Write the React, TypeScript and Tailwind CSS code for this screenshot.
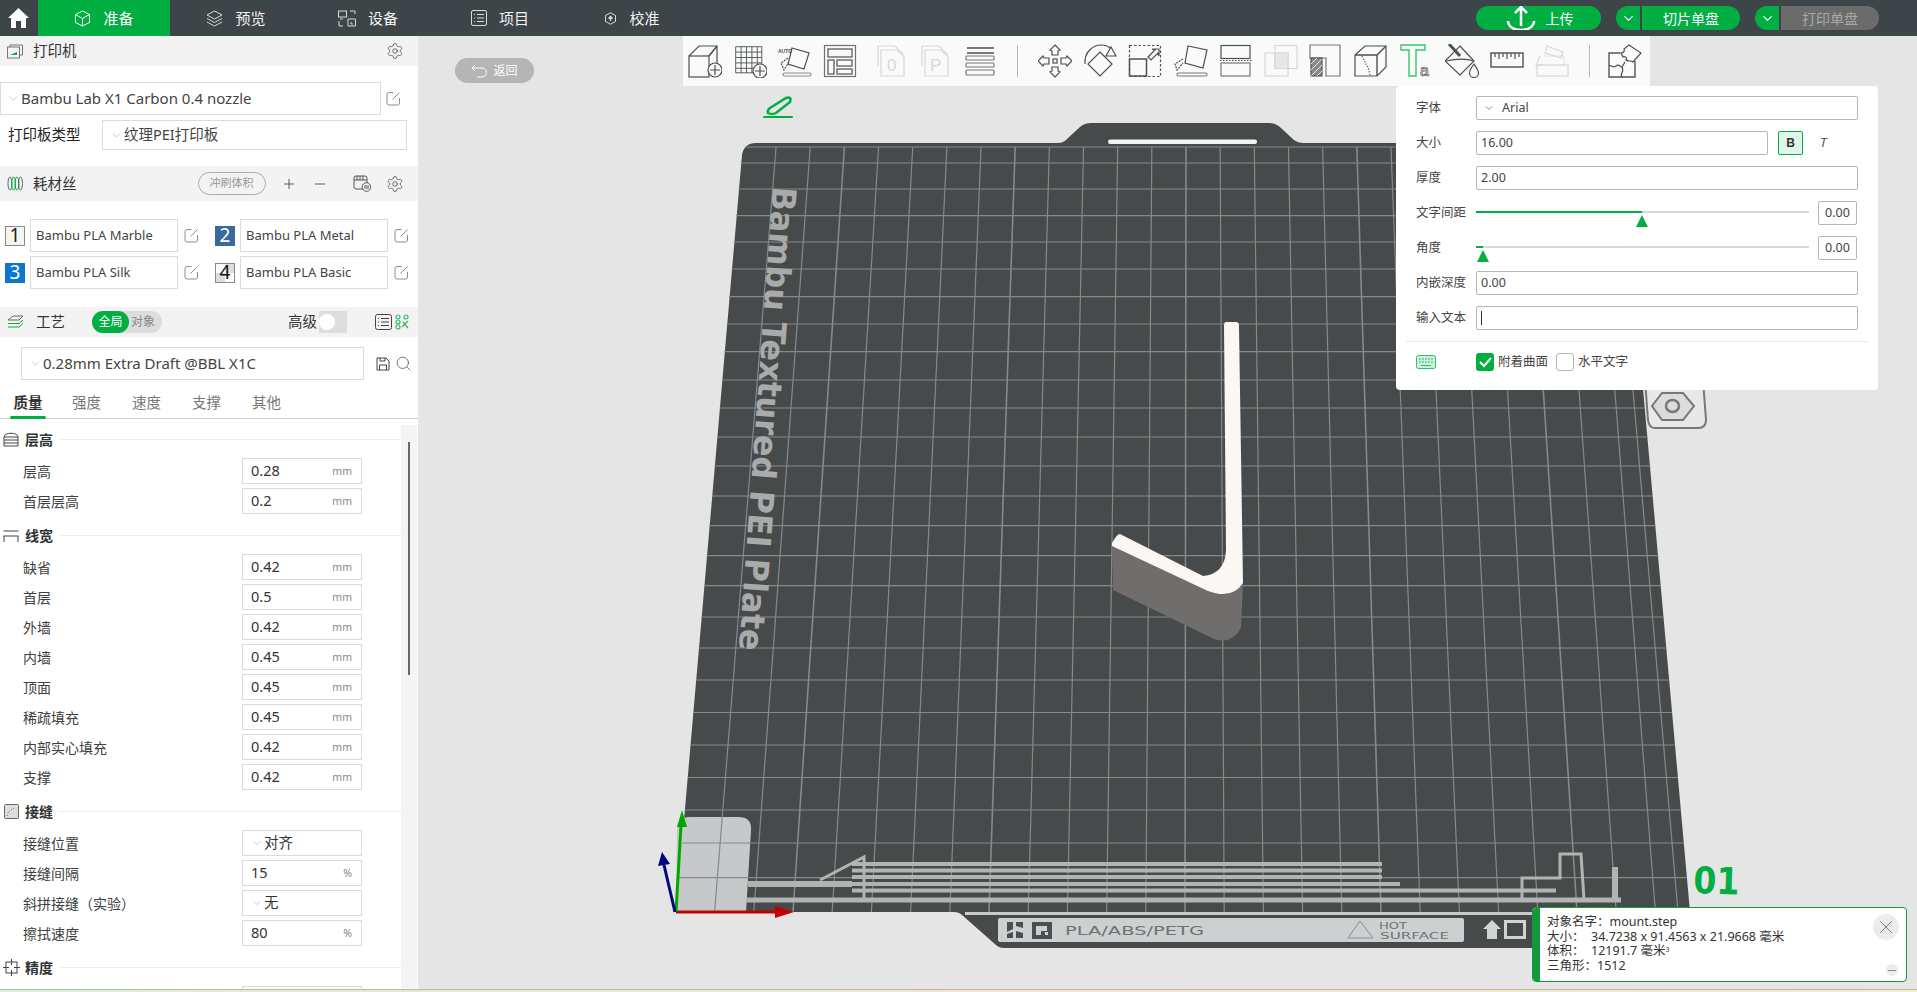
import { ChevronDown, Minus, Plus, Search, Settings, X } from "lucide-react";
import type { ReactNode } from "react";

const ink = "#4b5050";

function Ico({ children, off }: { children: ReactNode; off?: boolean }) {
  return (
    <svg width="34" height="34" viewBox="0 0 34 34" fill="none" stroke={off ? "#d6d8d8" : ink} strokeWidth="1.2" className="shrink-0">
      {children}
    </svg>
  );
}

function Edit() {
  return (
    <svg width="15" height="15" viewBox="0 0 15 15" fill="none" stroke="#8b8f8f" strokeWidth="1" className="shrink-0">
      <path d="M7.5 1.5H3a2 2 0 0 0-2 2v8.5a2 2 0 0 0 2 2h8.5a2 2 0 0 0 2-2V7" />
      <path d="M6.5 8.5 13.5 1.5" />
    </svg>
  );
}

const tools1 = [
  <Ico key="cube">
    <path d="M1 12 11 2h18v22" /><rect x="1" y="12" width="20" height="21" /><path d="M21 12 29 2" strokeWidth="1.6" />
    <circle cx="27" cy="26" r="7" fill="#fafafa" /><path d="M27 21v10M22 26h10" />
  </Ico>,
  <Ico key="grid">
    <path d="M3 3h29v29H3zM9 3v29M15 3v29M21 3v29M27 3v29M3 9h29M3 15h29M3 21h29M3 27h29" strokeWidth="1" transform="scale(.9)" />
    <circle cx="27" cy="27" r="7" fill="#fafafa" /><path d="M27 22v10M22 27h10" />
  </Ico>,
  <Ico key="auto">
    <path d="M14 4 31 9 26 25 10 20Z" /><path d="M10 14 3 19l3 7 5-8" strokeDasharray="2 1" />
    <rect x="5" y="29" width="28" height="3" rx="1.5" stroke="#8a8d8d" />
    <text x="0" y="9" fontSize="5" fill={ink} stroke="none" fontFamily="Liberation Sans" fontWeight="700">AUTO</text>
  </Ico>,
  <Ico key="arrange">
    <rect x="1.5" y="1.5" width="31" height="31" stroke="#6e7272" /><rect x="5" y="5" width="24" height="8" /><rect x="5" y="16" width="6" height="14" /><rect x="14" y="16" width="15" height="6" /><rect x="14" y="25" width="15" height="5" />
  </Ico>,
];

const tools2 = [
  <Ico key="p0" off>
    <path d="M4 22V2h17l8 8v20" /><path d="M7 6h16l7 7v19H7Z" fill="#fafafa" />
    <text x="13" y="27" fontSize="17" fill="#d6d8d8" stroke="none" fontFamily="Liberation Sans">0</text>
  </Ico>,
  <Ico key="pp" off>
    <path d="M4 22V2h17l8 8v20" /><path d="M7 6h16l7 7v19H7Z" fill="#fafafa" />
    <text x="12" y="27" fontSize="17" fill="#d6d8d8" stroke="none" fontFamily="Liberation Sans">P</text>
  </Ico>,
  <Ico key="stack">
    <path d="M5 4h27M5 9h27" strokeWidth="1.6" /><rect x="4" y="12" width="28" height="4" rx="1" stroke="#777" /><rect x="4" y="19" width="28" height="4" rx="1" stroke="#777" /><rect x="4" y="26" width="28" height="5" rx="1" stroke="#777" />
  </Ico>,
];

const tools3 = [
  <Ico key="move">
    <rect x="15" y="15" width="4" height="4" />
    <path d="m17 1 5 5-2 1v4h-6V7l-2-1ZM17 33l5-5-2-1v-4h-6v4l-2 1ZM0 17l5-5 1 2h5v6H6l-1 2ZM34 17l-5-5-1 2h-5v6h5l1 2Z" />
  </Ico>,
  <Ico key="rotate">
    <path d="M17 8 29 20 17 32 5 20Z" /><path d="M2 20C1 8 10 1 18 1c4 0 7 1 9 3" /><path d="M28 3 33 12H23Z" />
  </Ico>,
  <Ico key="scale">
    <rect x="1.5" y="1.5" width="31" height="31" strokeDasharray="2.5 2" /><rect x="1.5" y="15" width="17" height="17" strokeWidth="1.5" />
    <path d="m20 13 7-7-3-1h7v7l-1-3-7 7Z" />
  </Ico>,
  <Ico key="lay">
    <path d="M14 2 33 6l-4 18-18-5Z" /><path d="M9 15 1 20l2 6 6-7" strokeDasharray="2 1" /><rect x="3" y="29" width="30" height="3" rx="1.5" stroke="#777" />
  </Ico>,
  <Ico key="cut">
    <rect x="2" y="1.5" width="29" height="13" /><rect x="2" y="19" width="29" height="13" stroke="#777" /><path d="M1 16.5h32" strokeDasharray="1.5 1.5" />
  </Ico>,
  <Ico key="bool" off>
    <rect x="11" y="1.5" width="22" height="23" /><rect x="1" y="9" width="23" height="23" /><path d="M11 9h13v15.500H11Z" fill="#e6e8e8" />
  </Ico>,
  <Ico key="support">
    <path d="M1 1h30v31H17V14H1Z" stroke="#777" /><rect x="2" y="14" width="11" height="18" fill="#8a8a8a" stroke="#555" /><path d="m2 20 6-6M2 26l11-11M2 32l11-11M8 32l5-5" stroke="#eee" strokeWidth=".9" />
  </Ico>,
  <Ico key="seam">
    <path d="M1 11 11 2h21v21l-9 9H1Z" /><path d="M1 11h22l9-9M23 11v21" strokeWidth="1.4" /><path d="M8 12c3 5 3 8 6 11l2 8" strokeDasharray="1.2 1.6" />
  </Ico>,
  <Ico key="text">
    <path d="M1 1h24v5h-9v26H9V6H1Z" stroke="#39c56c" strokeWidth="1.4" />
    <text x="20" y="32" fontSize="16" fontFamily="Liberation Sans" fill="#fafafa" stroke={ink} strokeWidth=".7">a</text>
  </Ico>,
  <Ico key="paint">
    <path d="M15 2 29 17 15 31 0 17Z" /><path d="M1 17c9-2 19-3 28 0" /><path d="M4 0 15 12" strokeWidth="3" />
    <path d="M29 20c-3 4-4.500 6-4.500 9a4.500 4.500 0 0 0 9 0c0-3-2-5-4.500-9Z" fill="#fafafa" />
  </Ico>,
  <Ico key="ruler">
    <rect x="1" y="9" width="32" height="14" strokeWidth="1.4" /><path d="M5 9v4M9 9v6M13 9v4M17 9v6M21 9v4M25 9v6M29 9v4" />
  </Ico>,
  <Ico key="assemble" off>
    <path d="M12 2 28 8l-2 6-16-5Z" /><path d="M5 12 1 22l7-2" /><rect x="2" y="21" width="31" height="11" /><path d="M9 12h20v9" strokeDasharray="1.5 1" />
  </Ico>,
];

const toolPuzzle = (
  <Ico>
    <path d="M12 9H1V33H27V17" stroke="#555" strokeWidth="1.400" />
    <path d="M1 22c3-2 3 3 7 0s4 2 6 1M14 33c-3-3 3-5 0-10l3-5" />
    <path d="M21 1 33 9 25 18C23 16 20 18 18 16 20 14 17 12 15 13L13 9C16 9 17 6 16 5Z" fill="#fafafa" />
  </Ico>
);

const rowsHeight = [
  { label: "层高", value: "0.28", unit: "mm" },
  { label: "首层层高", value: "0.2", unit: "mm" },
];
const rowsWidth = [
  { label: "缺省", value: "0.42", unit: "mm" },
  { label: "首层", value: "0.5", unit: "mm" },
  { label: "外墙", value: "0.42", unit: "mm" },
  { label: "内墙", value: "0.45", unit: "mm" },
  { label: "顶面", value: "0.45", unit: "mm" },
  { label: "稀疏填充", value: "0.45", unit: "mm" },
  { label: "内部实心填充", value: "0.42", unit: "mm" },
  { label: "支撑", value: "0.42", unit: "mm" },
];
const rowsSeam = [
  { label: "接缝位置", value: "对齐", select: true },
  { label: "接缝间隔", value: "15", unit: "%" },
  { label: "斜拼接缝（实验）", value: "无", select: true },
  { label: "擦拭速度", value: "80", unit: "%" },
];

type Row = { label: string; value: string; unit?: string; select?: boolean };

function Group({ icon, title, rows }: { icon: ReactNode; title: string; rows: Row[] }) {
  return (
    <div className="mt-[9px] first:mt-[8px]">
      <div className="flex h-[24px] items-center">
        <div className="flex w-[25px] justify-center pr-[3px]">{icon}</div>
        <span className="text-[14px] font-bold text-[#2f3333]">{title}</span>
        <div className="ml-[6px] mr-[6px] h-px flex-1 bg-[#eeeeee]" />
      </div>
      <div className="mt-[7px] flex flex-col gap-[4px]">
        {rows.map((r) => (
          <div key={r.label} className="flex h-[26px] items-center">
            <span className="w-[242px] pl-[23px] text-[14px] text-[#3c4040]">{r.label}</span>
            <div className="flex h-[26px] w-[120px] items-center border border-[#dbdbdb] pl-[8px] pr-[9px] text-[14.500px] text-[#333]">
              {r.select && <ChevronDown size={12} strokeWidth={1} className="mr-[1px] text-[#999]" />}
              <span className="flex-1">{r.value}</span>
              {r.unit && <span className="pt-[2px] text-[10.500px] text-[#888]">{r.unit}</span>}
            </div>
          </div>
        ))}
      </div>
    </div>
  );
}

function SectionHead({ icon, title, children, left = 33 }: { icon: ReactNode; title: string; children?: ReactNode; left?: number }) {
  return (
    <div className="flex h-full items-center bg-[#f3f3f3] pl-[7px]">
      <div className="flex items-center" style={{ width: left - 7 }}>{icon}</div>
      <span className="text-[14.5px] text-[#333]">{title}</span>
      {children}
    </div>
  );
}

function Swatch({ n, cls }: { n: number; cls: string }) {
  return (
    <div className={`flex h-[20px] w-[20px] shrink-0 items-center justify-center text-[19px] leading-none ${cls}`}>{n}</div>
  );
}

function Filament({ n, cls, name }: { n: number; cls: string; name: string }) {
  return (
    <div className="flex w-[210px] shrink-0 items-center">
      <Swatch n={n} cls={cls} />
      <div className="ml-[5px] flex h-[33px] w-[148px] shrink-0 items-center border border-[#dcdcdc] pl-[5px] text-[13px] text-[#444]">{name}</div>
      <div className="ml-[6px]"><Edit /></div>
    </div>
  );
}

function Sidebar() {
  return (
    <aside className="relative flex h-full w-[418px] shrink-0 flex-col overflow-hidden bg-white">
      <div className="h-[30px] shrink-0">
        <SectionHead
          title="打印机"
          icon={
            <svg width="16" height="15" viewBox="0 0 16 15" fill="none" stroke="#777">
              <rect x=".5" y="3" width="12" height="11" /><path d="M3 3V1h12.5v10H13" /><path d="M3 11h7V8L3 11Z" fill="#00ae42" stroke="none" />
            </svg>
          }
        >
          <Settings size={18} strokeWidth={1} className="ml-auto mr-[14px] text-[#444]" />
        </SectionHead>
      </div>
      <div className="mt-[16px] flex h-[33px] shrink-0 items-center">
        <div className="flex h-[33px] w-[381px] items-center border border-[#dcdcdc] pl-[6px] text-[15px] text-[#444]">
          <ChevronDown size={13} strokeWidth={1} className="mr-[1px] text-[#999]" />
          Bambu Lab X1 Carbon 0.4 nozzle
        </div>
        <div className="ml-[5px]"><Edit /></div>
      </div>
      <div className="mt-[5px] flex h-[30px] shrink-0 items-center">
        <span className="w-[102px] pl-[8px] text-[14.5px] text-[#222]">打印板类型</span>
        <div className="flex h-[30px] w-[305px] items-center border border-[#dcdcdc] pl-[7px] text-[14.500px] text-[#444]">
          <ChevronDown size={13} strokeWidth={1} className="mr-[1px] text-[#999]" />
          纹理PEI打印板
        </div>
      </div>
      <div className="mt-[16px] h-[35px] shrink-0">
        <SectionHead
          title="耗材丝"
          icon={
            <svg width="16" height="15" viewBox="0 0 16 15" fill="none" stroke="#00ae42" strokeWidth="1">
              <ellipse cx="3" cy="7.5" rx="2" ry="6.5" stroke="#666" /><ellipse cx="6.5" cy="7.5" rx="2" ry="6.5" /><ellipse cx="10" cy="7.5" rx="2" ry="6.5" /><ellipse cx="13.5" cy="7.5" rx="2" ry="6.5" stroke="#666" />
            </svg>
          }
        >
          <div className="ml-[121px] flex h-[23px] w-[68px] items-center justify-center rounded-full border border-[#aaaaaa] text-[11px] text-[#999]">冲刷体积</div>
          <Plus size={16} strokeWidth={1.3} className="ml-[15px] text-[#444]" />
          <Minus size={16} strokeWidth={1.3} className="ml-[15px] text-[#444]" />
          <svg width="18" height="17" viewBox="0 0 18 17" fill="none" stroke="#555" className="ml-[25px]">
            <rect x="1" y="1" width="13" height="13" rx="2" /><path d="M1 5h13M4 1v4M7 1v4M10 1v4" />
            <circle cx="13.5" cy="12" r="4.3" fill="#f3f3f3" /><path d="M11 11h5M11 13h5" />
          </svg>
          <Settings size={18} strokeWidth={1} className="ml-[15px] text-[#444]" />
        </SectionHead>
      </div>
      <div className="mt-[18px] flex shrink-0 flex-col gap-[4px]">
        <div className="flex pl-[5px]">
          <Filament n={1} cls="border border-[#888] bg-[#f7f3ee] text-[#222]" name="Bambu PLA Marble" />
          <Filament n={2} cls="bg-[#3b689c] text-white" name="Bambu PLA Metal" />
        </div>
        <div className="flex pl-[5px]">
          <Filament n={3} cls="bg-[#0c78d2] text-white" name="Bambu PLA Silk" />
          <Filament n={4} cls="border border-[#888] bg-[conic-gradient(#dddddd_25%,#ffffff_0_50%,#dddddd_0_75%,#ffffff_0)] text-[#111]" name="Bambu PLA Basic" />
        </div>
      </div>
      <div className="mt-[18px] h-[30px] shrink-0">
        <SectionHead
          left={36}
          title="工艺"
          icon={
            <svg width="17" height="15" viewBox="0 0 17 15" fill="none" stroke="#666">
              <path d="M1 5 6 1h10l-4 4Z" /><path d="M1 8.5h11l4-3.5" stroke="#00ae42" /><path d="M1 12h11l4-3.5" stroke="#00ae42" />
            </svg>
          }
        >
          <div className="ml-[27px] flex h-[22px] w-[70px] items-center rounded-full bg-[#dddddd] text-[12px]">
            <span className="flex h-[22px] w-[37px] items-center justify-center rounded-full bg-[#00ae42] text-white">全局</span>
            <span className="pl-[2px] text-[#888]">对象</span>
          </div>
          <span className="ml-[126px] text-[14.5px] text-[#333]">高级</span>
          <div className="ml-[2px] flex h-[22px] w-[28px] items-center bg-[#dddddd]">
            <div className="h-[16px] w-[16px] rounded-full bg-white" />
          </div>
          <svg width="17" height="16" viewBox="0 0 17 16" fill="none" stroke="#444" className="ml-[28px]">
            <rect x=".5" y=".5" width="16" height="15" rx="2" /><path d="M3 4.500h1M6 4.500h8M3 8h1M6 8h8M3 11.500h1M6 11.500h8" />
          </svg>
          <svg width="15" height="16" viewBox="0 0 15 16" fill="none" stroke="#39b56b" strokeWidth="1.2" className="ml-[3px]">
            <circle cx="3" cy="3" r="2" /><circle cx="11" cy="3" r="2" /><circle cx="3" cy="8" r="2" /><circle cx="3" cy="13" r="2" /><path d="M7 13 13 7M8 8l5 6" />
          </svg>
        </SectionHead>
      </div>
      <div className="mt-[10px] flex h-[33px] shrink-0 items-center pl-[21px]">
        <div className="flex h-[33px] w-[343px] items-center border border-[#dcdcdc] pl-[7px] text-[15px] text-[#444]">
          <ChevronDown size={13} strokeWidth={1} className="mr-[1px] text-[#999]" />
          0.28mm Extra Draft @BBL X1C
        </div>
        <svg width="14" height="14" viewBox="0 0 14 14" fill="none" stroke="#444" className="ml-[12px]">
          <path d="M1 1h9l3 3v9H1ZM3.500 13V8h7v5M4 1v3h5V1" />
        </svg>
        <Search size={17} strokeWidth={1} className="ml-[5px] text-[#444]" />
      </div>
      <div className="mt-[5px] flex h-[34px] shrink-0 items-start border-b border-[#cfcfcf] pl-[10px] pt-[7px] text-[14.500px] text-[#777]">
        <div className="relative w-[36px] text-center font-bold text-[#333]">
          质量
          <div className="absolute left-0 right-0 top-[24px] h-[3px] rounded-full bg-[#00ae42]" />
        </div>
        <span className="ml-[26px]">强度</span>
        <span className="ml-[31px]">速度</span>
        <span className="ml-[31px]">支撑</span>
        <span className="ml-[31px]">其他</span>
      </div>
      <div className="relative flex-1 overflow-hidden">
        <Group
          title="层高"
          rows={rowsHeight}
          icon={
            <svg width="16" height="15" viewBox="0 0 16 15" fill="none" stroke="#444">
              <path d="M1 5c0-5 14-5 14 0M1 5h14M1 8h14M1 11h14M1 14h14V5M1 14V5" />
            </svg>
          }
        />
        <Group
          title="线宽"
          rows={rowsWidth}
          icon={
            <svg width="16" height="13" viewBox="0 0 16 13" fill="none" stroke="#444">
              <path d="M.5 2h15M.5 7h15M1 7v6M15 7v6" />
            </svg>
          }
        />
        <Group
          title="接缝"
          rows={rowsSeam}
          icon={
            <svg width="15" height="15" viewBox="0 0 15 15" fill="#ddd" stroke="#666">
              <rect x=".5" y=".5" width="14" height="14" rx="1" /><path d="M3 12c1-4 4-7 8-8" strokeDasharray="1 1.500" fill="none" />
            </svg>
          }
        />
        <Group
          title="精度"
          rows={[{ label: "", value: "" }]}
          icon={
            <svg width="17" height="17" viewBox="0 0 17 17" fill="none" stroke="#444">
              <rect x="3" y="3" width="11" height="11" /><path d="M8.500 0v6M8.500 11v6M0 8.500h6M11 8.500h6" />
            </svg>
          }
        />
        <div className="absolute bottom-0 right-[1px] top-[6px] w-[16px] bg-[#f4f4f4]">
          <div className="ml-[7px] mt-[17px] h-[233px] w-[2px] bg-[#666]" />
        </div>
      </div>
    </aside>
  );
}

function Plate() {
  const ys = [163, 189, 215.7, 242, 269, 296.7, 324, 351.7, 380, 408, 437, 466, 496, 525.7, 555.7, 585.7, 617, 648, 680, 712.5, 745, 777.5, 810, 843, 877.7];
  const columns = Array.from({ length: 25 }, (_, k) => k - 12);
  const leftAt = (y: number) => 742 + ((y - 147) / 765) * (676 - 742);
  const rightAt = (y: number) => 1622 + ((y - 147) / 765) * (1690 - 1622);
  return (
    <svg viewBox="418 36 1499 953" className="absolute inset-0 h-full w-full">
      <path
        d="M1645 380 1703 380 1706 420Q1706 428 1698 428H1655Q1649 428 1648 420Z"
        fill="#e8e8e8"
        stroke="#777"
        strokeWidth="2"
      />
      <path d="M1658 406 1668 393H1689L1700 406 1689 420H1668Z" fill="#dcdcdc" stroke="#777" strokeWidth="2" transform="translate(-6 0)" />
      <ellipse cx="1672.500" cy="406" rx="6.500" ry="6" fill="none" stroke="#777" strokeWidth="2.500" />
      <path
        d="M742 155Q744 143 756 143H1058Q1064 143 1068 138L1080 127Q1084 123 1092 123H1268Q1276 123 1281 128L1294 140Q1298 143 1304 143H1606Q1620 143 1622 155L1690 912H1600L1560 948H1004Q999 948 996 945L962 915Q959 912 954 912H676Z"
        fill="#474a4a"
      />
      <rect x="1108" y="139.500" width="149" height="4.500" rx="2" fill="#f4f4f2" />
      <path d="M676 912 677 830Q677 817 690 817H738Q752 817 751 830L746 912Z" fill="#c6c9c9" />
      <g stroke="#858989" strokeWidth="1.200">
        {ys.map((y) => (
          <line key={y} x1={leftAt(y)} y1={y} x2={rightAt(y)} y2={y} />
        ))}
        <line x1="745" y1="147" x2="1622" y2="147" />
        {columns.map((c) => (
          <line key={c} x1={1186 + c * 34.16} y1="147" x2={1185 + c * 39.2} y2="912" strokeWidth={c % 5 === 0 ? 1.6 : 1.2} />
        ))}
        <line x1="1612" y1="147" x2="1678" y2="912" />
      </g>
      <text
        transform="translate(773 186) rotate(94.200)"
        fontFamily="DejaVu Sans"
        fontWeight="700"
        fontSize="33"
        textLength="465"
        lengthAdjust="spacingAndGlyphs"
        fill="#a9abab"
      >
        Bambu Textured PEI Plate
      </text>

      {/* object on the plate */}
      <path d="M1112 545 1113 590 1214 639Q1232 645 1241 628L1243 583 1217 593Z" fill="#6f6e6c" />
      <path d="M1226 322Q1224 322 1224 326L1226 550Q1225 574 1203 576L1120 534Q1117 534 1112 543V546L1208 591Q1232 600 1243 583L1239 326Q1239 322 1236 322Z" fill="#faf7f4" />

      {/* strips printed near the front edge */}
      <g fill="#b2b4b4">
        <rect x="852" y="862" width="530" height="4" />
        <rect x="852" y="868.500" width="530" height="4" />
        <rect x="852" y="875" width="530" height="4" />
        <rect x="748" y="881" width="104" height="6" />
        <rect x="852" y="882" width="548" height="4" />
        <rect x="852" y="888.500" width="704" height="4" />
        <rect x="746" y="897.500" width="875" height="5" />
        <rect x="1612" y="867" width="6" height="33" />
      </g>
      <path d="M1522 900V878H1560V854H1581L1584 900M820 880 864 857V898" fill="none" stroke="#b2b4b4" strokeWidth="3" />

      {/* front tab */}
      <rect x="965" y="912" width="570" height="3" fill="#c9cbcb" />
      <rect x="998" y="918" width="466" height="24" rx="2" fill="#cdd0d0" />
      <path d="M1007 922h6v7l-6 3Zm9 0h7v6l-7-2Zm-9 12 6-2v6h-6Zm9-3 7 2v5h-7Z" fill="#4b4f4f" />
      <path d="M1032 922h20v17h-20Zm4 4v9h5v-4h6v-5Zm9 6v3h3v-3Z" fill="#4b4f4f" fillRule="evenodd" />
      <text x="1065" y="935" fontFamily="DejaVu Sans" fontSize="13" textLength="139" lengthAdjust="spacingAndGlyphs" fill="#6e7272">PLA/ABS/PETG</text>
      <path d="M1360 921 1348 938H1373Z" fill="none" stroke="#8b8f8f" />
      <text x="1379" y="929" fontFamily="DejaVu Sans" fontSize="9" textLength="28" lengthAdjust="spacingAndGlyphs" fill="#6e7272">HOT</text>
      <text x="1380" y="938.500" fontFamily="DejaVu Sans" fontSize="9" textLength="69" lengthAdjust="spacingAndGlyphs" fill="#6e7272">SURFACE</text>
      <path d="M1492 920 1501 929H1497V939H1487V929H1483Z" fill="#d2d4d4" />
      <rect x="1505.500" y="921.500" width="19" height="16" fill="none" stroke="#d2d4d4" strokeWidth="3" />

      <text x="1693" y="893" fontFamily="DejaVu Sans" fontWeight="700" fontSize="37" textLength="46" lengthAdjust="spacingAndGlyphs" fill="#00ae42" transform="rotate(2 1693 893)">01</text>

      {/* axes */}
      <line x1="676" y1="912" x2="780" y2="912" stroke="#c40000" strokeWidth="3" />
      <path d="M775 906 794 912 775 918Z" fill="#c40000" />
      <line x1="676" y1="912" x2="681" y2="825" stroke="#00a800" strokeWidth="3" />
      <path d="M677 827 682 810 687 827Z" fill="#00a800" />
      <line x1="675" y1="912" x2="664" y2="865" stroke="#000a80" strokeWidth="3" />
      <path d="M658 866 662 852 670 864Z" fill="#000a80" />

      {/* edit pen */}
      <path d="M770 108 786 98Q792 96 790 102L776 113Q772 115 768 113Q767 110 770 108Z" fill="none" stroke="#00ae42" strokeWidth="2.500" />
      <rect x="763" y="116" width="30" height="2" rx="1" fill="#00ae42" />
    </svg>
  );
}

function TextPanel() {
  const label = "w-[60px] shrink-0 text-[12.5px] text-[#444]";
  const field = "flex h-[24px] items-center rounded-[2px] border border-[#b5b5b5] px-[4px] text-[12.5px] text-[#444]";
  return (
    <div className="absolute left-[978px] top-[50px] flex h-[304px] w-[482px] flex-col rounded-[4px] bg-white pl-[20px] pr-[20px] pt-[10px]">
      <div className="flex flex-col gap-[11px]">
        <div className="flex items-center">
          <span className={label}>字体</span>
          <div className={`${field} flex-1 pl-[6px]`}>
            <ChevronDown size={12} strokeWidth={1.2} className="mr-[7px]" />Arial
          </div>
        </div>
        <div className="flex items-center">
          <span className={label}>大小</span>
          <div className={`${field} w-[292px]`}>16.00</div>
          <div className="ml-[10px] flex h-[24px] w-[25px] items-center justify-center rounded-[2px] border border-[#00ae42] bg-[#dff7e8] text-[12px] font-bold text-[#333] [font-family:'Liberation_Sans']">B</div>
          <span className="ml-[17px] text-[13px] italic text-[#555]">T</span>
        </div>
        <div className="flex items-center">
          <span className={label}>厚度</span>
          <div className={`${field} flex-1`}>2.00</div>
        </div>
        <div className="flex items-center">
          <span className={label}>文字间距</span>
          <div className="relative h-[24px] w-[333px]">
            <div className="absolute left-0 right-0 top-[10px] h-[2px] bg-[#d8d8d8]" />
            <div className="absolute left-0 top-[10px] h-[2px] w-[166px] bg-[#00ae42]" />
            <div className="absolute left-[160px] top-[14px] h-0 w-0 border-x-[6px] border-b-[12px] border-x-transparent border-b-[#00ae42]" />
          </div>
          <div className={`${field} ml-[9px] w-[39px] justify-center px-0`}>0.00</div>
        </div>
        <div className="flex items-center">
          <span className={label}>角度</span>
          <div className="relative h-[24px] w-[333px]">
            <div className="absolute left-0 right-0 top-[10px] h-[2px] bg-[#d8d8d8]" />
            <div className="absolute left-0 top-[10px] h-[2px] w-[7px] bg-[#00ae42]" />
            <div className="absolute left-[1px] top-[14px] h-0 w-0 border-x-[6px] border-b-[12px] border-x-transparent border-b-[#00ae42]" />
          </div>
          <div className={`${field} ml-[9px] w-[39px] justify-center px-0`}>0.00</div>
        </div>
        <div className="flex items-center">
          <span className={label}>内嵌深度</span>
          <div className={`${field} flex-1`}>0.00</div>
        </div>
        <div className="flex items-center">
          <span className={label}>输入文本</span>
          <div className={`${field} flex-1`}><div className="h-[14px] w-px bg-[#333]" /></div>
        </div>
      </div>
      <div className="-mx-[10px] mt-[11px] h-px bg-[#e8e8e8]" />
      <div className="mt-[11px] flex h-[18px] items-center text-[12.5px] text-[#444]">
        <div className="w-[60px]">
          <svg width="20" height="14" viewBox="0 0 20 14" fill="#cdf2dc" stroke="#2fbf6c">
            <rect x=".5" y=".5" width="19" height="13" rx="2" /><path d="M3 4h14M3 7h14" strokeDasharray="2 1" /><path d="M5 10.500h10" />
          </svg>
        </div>
        <div className="flex h-[18px] w-[18px] items-center justify-center rounded-[3px] bg-[#00ae42]">
          <svg width="13" height="11" viewBox="0 0 13 11" fill="none" stroke="#fff" strokeWidth="2"><path d="m1 5 4 4 7-8" /></svg>
        </div>
        <span className="ml-[4px]">附着曲面</span>
        <div className="ml-[8px] h-[18px] w-[18px] rounded-[3px] border border-[#b5b5b5]" />
        <span className="ml-[4px]">水平文字</span>
      </div>
    </div>
  );
}

function InfoBox() {
  return (
    <div className="absolute left-[1114px] top-[871px] flex h-[75px] w-[375px] overflow-hidden rounded-[4px] border border-[#109a3c] bg-white">
      <div className="w-[7px] shrink-0 bg-[#109a3c]" />
      <div className="pl-[7px] pt-[7px] text-[12.5px] leading-[14.700px] text-[#333]">
        <div>对象名字：mount.step</div>
        <div>大小：&nbsp; 34.7238 x 91.4563 x 21.9668 毫米</div>
        <div>体积：&nbsp; 12191.7 毫米<sup className="text-[7px]">3</sup></div>
        <div>三角形：1512</div>
      </div>
      <div className="absolute right-[7px] top-[6px] flex h-[26px] w-[26px] items-center justify-center rounded-full bg-[#ececec]">
        <X size={22} strokeWidth={0.9} className="text-[#666]" />
      </div>
      <div className="absolute bottom-[5px] right-[8px] flex h-[12px] w-[12px] items-center justify-center rounded-full bg-[#ececec]">
        <div className="h-px w-[8px] bg-[#888]" />
      </div>
    </div>
  );
}

function Canvas() {
  return (
    <main className="relative h-full flex-1 overflow-hidden bg-[#e5e5e5]">
      <Plate />
      <div className="absolute left-[37px] top-[22px] flex h-[25px] w-[79px] items-center justify-center gap-[5px] rounded-full bg-[#b5b5b5] text-[12px] text-white">
        <svg width="17" height="14" viewBox="0 0 17 14" fill="none" stroke="#fff" strokeWidth="1">
          <path d="M4 1 1 4l3 3M1 4h10a4.500 4.500 0 0 1 0 9H6" />
        </svg>
        返回
      </div>
      <div className="absolute left-[265px] top-0 flex h-[50px] w-[967px] items-center bg-[#fafafa] pl-[5px]">
        <div className="flex gap-[11px]">{tools1}</div>
        <div className="ml-[17px] flex gap-[10px]">{tools2}</div>
        <div className="ml-[21px] mr-[20px] h-[32px] w-px bg-[#b5b8b8]" />
        <div className="flex gap-[11.200px]">{tools3}</div>
        <div className="ml-[20px] mr-[18px] h-[32px] w-px bg-[#b5b8b8]" />
        {toolPuzzle}
      </div>
      <TextPanel />
      <InfoBox />
    </main>
  );
}

const navItems = [
  {
    label: "准备",
    icon: (
      <svg width="17" height="17" viewBox="0 0 17 17" fill="none" stroke="#fff">
        <path d="M8.500 1 15.500 4.500V12.500L8.500 16 1.500 12.500V4.500ZM1.500 4.500 8.500 8.500 15.500 4.500M8.500 8.500V16" />
      </svg>
    ),
  },
  {
    label: "预览",
    icon: (
      <svg width="17" height="17" viewBox="0 0 17 17" fill="none" stroke="#d8dada">
        <path d="M8.500 1 16 5 8.500 9 1 5ZM1 8.500 8.500 12.500 16 8.500M1 12 8.500 16 16 12" />
      </svg>
    ),
  },
  {
    label: "设备",
    icon: (
      <svg width="18" height="17" viewBox="0 0 18 17" fill="none" stroke="#d8dada">
        <rect x=".5" y="1" width="8" height="6" /><path d="M12 1h5v3M1 11v5h4M5 9H2M12 9h5.500v7H10V9Z" /><path d="M13 12v2h2" />
      </svg>
    ),
  },
  {
    label: "项目",
    icon: (
      <svg width="16" height="16" viewBox="0 0 16 16" fill="none" stroke="#d8dada">
        <rect x=".5" y=".5" width="15" height="15" rx="1.500" /><path d="M3 4.500h1M6 4.500h7M3 8h1M6 8h7M3 11.500h1M6 11.500h7" />
      </svg>
    ),
  },
  {
    label: "校准",
    icon: (
      <svg width="13" height="13" viewBox="0 0 13 13" fill="none" stroke="#d8dada">
        <path d="M6.500 .8 11.500 3.500V9.500L6.500 12.200 1.500 9.500V3.500Z" strokeLinejoin="round" /><path d="M6.500 9V4.500M4.500 6.500l2-2 2 2" strokeWidth="1.300" />
      </svg>
    ),
  },
];

function TopBar() {
  return (
    <header className="flex h-[36px] shrink-0 items-center bg-[#3e4548] text-[15px]">
      <div className="flex h-full w-[38px] items-center justify-center pr-[2px]">
        <svg width="21" height="20" viewBox="0 0 21 20" fill="#fff"><path d="M10.500 0 21 10h-3v10h-5v-7H8v7H3V10H0Z" /></svg>
      </div>
      {navItems.map((item, i) => (
        <div
          key={item.label}
          className={i === 0 ? "flex h-full w-[132px] items-center justify-center gap-[12px] bg-[#00ae42] text-white" : "flex h-full w-[132px] items-center justify-center gap-[12px] text-[#f2f2f2]"}
        >
          {item.icon}
          <span>{item.label}</span>
        </div>
      ))}
      <div className="ml-auto flex items-center pr-[38px]">
        <div className="relative flex h-[24px] w-[125px] items-center justify-center overflow-hidden rounded-full bg-[#00ae42] pl-[42px] text-[14px] text-white">
          <svg width="30" height="24" viewBox="0 0 30 24" fill="none" stroke="#fff" strokeWidth="2.500" className="absolute left-[30px] top-0">
            <path d="M15 20V2M9 7l6-6 6 6" /><path d="M2 15c0 12 26 12 26 0" />
          </svg>
          上传
        </div>
        <div className="ml-[15px] flex h-[24px] w-[24px] items-center justify-center rounded-l-full bg-[#00ae42]"><ChevronDown size={15} className="text-white" /></div>
        <div className="ml-[2px] flex h-[24px] w-[98px] items-center justify-center rounded-r-full bg-[#00ae42] text-[14px] text-white">切片单盘</div>
        <div className="ml-[15px] flex h-[24px] w-[24px] items-center justify-center rounded-l-full bg-[#00ae42]"><ChevronDown size={15} className="text-white" /></div>
        <div className="ml-[2px] flex h-[24px] w-[98px] items-center justify-center rounded-r-full bg-[#6b6b6b] text-[14px] text-[#a8a8a8]">打印单盘</div>
      </div>
    </header>
  );
}

export default function App() {
  return (
    <div className="flex h-screen w-screen flex-col overflow-hidden bg-white [font-family:'Noto_Sans','Noto_Sans_CJK_SC',sans-serif]">
      <TopBar />
      <div className="flex min-h-0 flex-1">
        <Sidebar />
        <Canvas />
      </div>
      <div className="h-[3px] shrink-0 border-t border-[#b8b8b8] bg-gradient-to-r from-[#d9f3d2] via-[#f0e2cc] to-[#f4edc2]" />
    </div>
  );
}
